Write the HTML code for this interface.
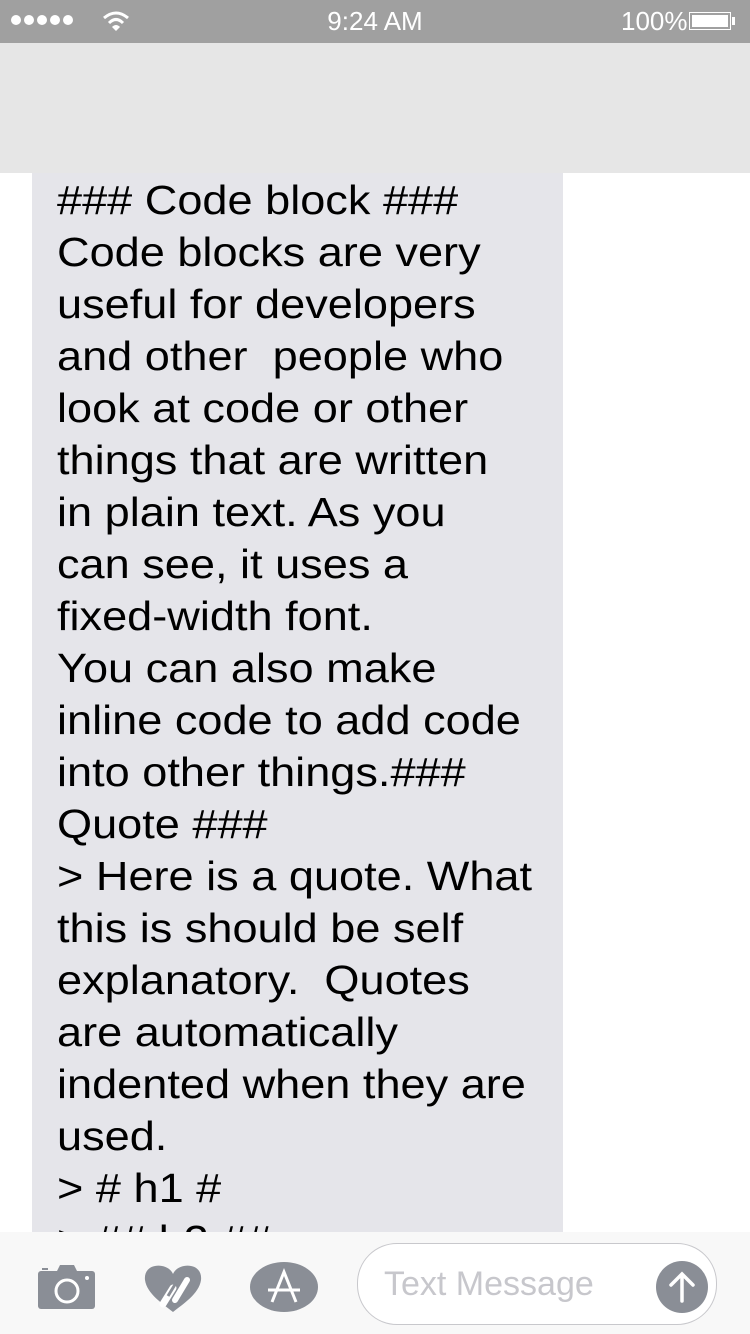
<!DOCTYPE html>
<html><head><meta charset="utf-8"><style>
body{margin:0;width:750px;height:1334px;overflow:hidden;background:#fff;font-family:"Liberation Sans",sans-serif;position:relative}
.sb{position:absolute;left:0;top:0;width:750px;height:43px;background:#a0a0a0;color:#fff}
.hd{position:absolute;left:0;top:43px;width:750px;height:130px;background:#e6e6e6}
.bub{position:absolute;left:32px;top:173px;width:531px;height:1100px;background:#e5e5ea}
.txt{position:absolute;left:57px;top:174px;font-size:41px;line-height:52px;color:#000;white-space:pre;transform:scaleX(1.1);transform-origin:left top}
.tb{position:absolute;left:0;top:1232px;width:750px;height:102px;background:#f8f8f8}
.box{position:absolute;left:357px;top:1243px;width:360px;height:82px;border:1.5px solid #c8c8cc;border-radius:40px;box-sizing:border-box;background:#fff}
</style></head><body>
<div class="hd"></div>
<div class="bub"></div>
<div class="txt">### Code block ###
Code blocks are very
useful for developers
and other  people who
look at code or other
things that are written
in plain text. As you
can see, it uses a
fixed-width font.
You can also make
inline code to add code
into other things.###
Quote ###
&gt; Here is a quote. What
this is should be self
explanatory.  Quotes
are automatically
indented when they are
used.
&gt; # h1 #
&gt; ## h2 ##</div>
<div class="sb">
 <div style="position:absolute;left:11px;top:15px;display:flex;gap:3px">
  <span style="width:10px;height:10px;border-radius:50%;background:#fff"></span><span style="width:10px;height:10px;border-radius:50%;background:#fff"></span><span style="width:10px;height:10px;border-radius:50%;background:#fff"></span><span style="width:10px;height:10px;border-radius:50%;background:#fff"></span><span style="width:10px;height:10px;border-radius:50%;background:#fff"></span>
 </div>
 <svg style="position:absolute;left:102px;top:10px" width="28" height="22" viewBox="0 0 28 22"><path d="M2 8 Q14 -2 26 8" stroke="#fff" stroke-width="3" fill="none"/><path d="M7 13 Q14 6 21 13" stroke="#fff" stroke-width="3" fill="none"/><path d="M10 17 L14 21 L18 17 Q14 13 10 17Z" fill="#fff"/></svg>
 <div style="position:absolute;left:0;width:750px;text-align:center;top:6px;font-size:26px">9:24 AM</div>
 <div style="position:absolute;left:621px;top:6px;font-size:26px">100%</div>
 <div style="position:absolute;left:689px;top:12px;width:42px;height:18px;border:1.5px solid #fff;box-sizing:border-box;padding:2px"><div style="background:#fff;width:100%;height:100%"></div></div>
 <div style="position:absolute;left:732px;top:17px;width:3px;height:8px;background:#fff"></div>
</div>
<div class="tb">
 <svg style="position:absolute;left:38px;top:33px" width="57" height="44" viewBox="0 0 57 44"><rect x="0" y="6" width="57" height="38" rx="3" fill="#8a8e96"/><path d="M18 8 L22 0 H36 L40 8Z" fill="#8a8e96"/><rect x="4" y="3" width="6" height="2" fill="#8a8e96"/><circle cx="29" cy="26" r="11" fill="none" stroke="#fff" stroke-width="3"/><circle cx="49" cy="13" r="2" fill="#fff"/></svg>
 <svg style="position:absolute;left:143px;top:30px" width="60" height="52" viewBox="0 0 60 52"><path d="M30 12 C25 0 0 0 2 18 C4 32 20 42 30 50 C40 42 56 32 58 18 C60 0 35 0 30 12Z" fill="#8a8e96"/><path d="M20 42 L30 26" stroke="#fff" stroke-width="7" stroke-linecap="round"/><path d="M25 34 L36 16" stroke="#8a8e96" stroke-width="3"/><path d="M32 38 L44 18" stroke="#fff" stroke-width="6" stroke-linecap="round"/></svg>
 <svg style="position:absolute;left:250px;top:30px" width="68" height="50" viewBox="0 0 68 50"><ellipse cx="34" cy="25" rx="34" ry="25" fill="#8a8e96"/><path d="M22 40 L34 10 L46 40 M18 28 H50" stroke="#fff" stroke-width="3" fill="none"/></svg>
 <div class="box" style="top:11px"></div>
 <div style="position:absolute;left:384px;top:33px;font-size:34px;color:#c7c7cc">Text Message</div>
 <div style="position:absolute;left:656px;top:29px;width:52px;height:52px;border-radius:50%;background:#8a8e96"></div>
 <svg style="position:absolute;left:656px;top:29px" width="52" height="52" viewBox="0 0 52 52"><path d="M26 40 V13 M15 24 L26 13 L37 24" stroke="#fff" stroke-width="3.5" fill="none" stroke-linecap="round"/></svg>
</div>
</body></html>
